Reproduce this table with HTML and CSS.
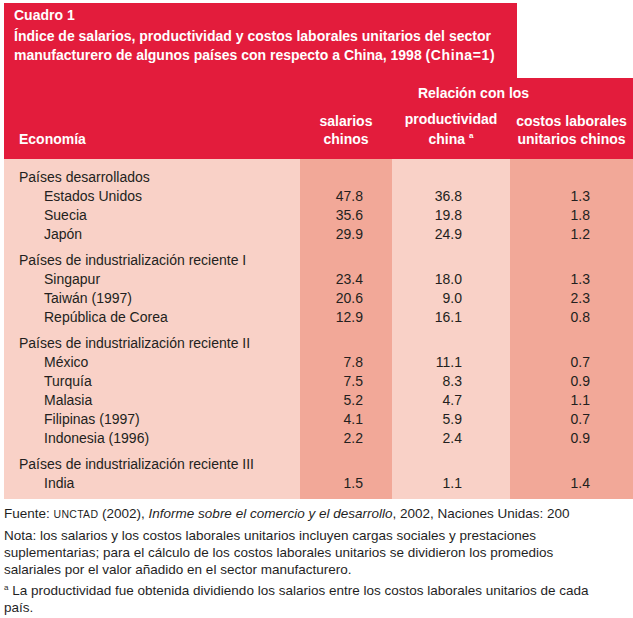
FILE: index.html
```html
<!DOCTYPE html>
<html lang="es">
<head>
<meta charset="utf-8">
<title>Cuadro 1</title>
<link rel="stylesheet" href="styles.css">
</head>
<body>
<div class="caption">
  <div class="caption-label">Cuadro 1</div>
  <div class="caption-title">Índice de salarios, productividad y costos laborales unitarios del sector<br>manufacturero de algunos países con respecto a China, 1998 <span class="paren">(China=1)</span></div>
</div>
<table class="data">
  <colgroup>
    <col class="c-eco">
    <col class="c-sal">
    <col class="c-pro">
    <col class="c-cos">
  </colgroup>
  <thead>
    <tr class="h-top">
      <th class="h-eco" rowspan="2">Economía</th>
      <th class="h-rel" colspan="3">Relación con los</th>
    </tr>
    <tr class="h-cols">
      <th class="h-col">salarios<br>chinos</th>
      <th class="h-col"><span class="h-first">productividad</span>china <sup class="sup">a</sup></th>
      <th class="h-col">costos laborales<br>unitarios chinos</th>
    </tr>
  </thead>
  <tbody>
    <tr class="grp first"><td class="name">Países desarrollados</td><td class="v1"></td><td class="v2"></td><td class="v3"></td></tr>
    <tr><td class="name item">Estados Unidos</td><td class="v1">47.8</td><td class="v2">36.8</td><td class="v3">1.3</td></tr>
    <tr><td class="name item">Suecia</td><td class="v1">35.6</td><td class="v2">19.8</td><td class="v3">1.8</td></tr>
    <tr><td class="name item">Japón</td><td class="v1">29.9</td><td class="v2">24.9</td><td class="v3">1.2</td></tr>

    <tr class="grp"><td class="name">Países de industrialización reciente I</td><td class="v1"></td><td class="v2"></td><td class="v3"></td></tr>
    <tr><td class="name item">Singapur</td><td class="v1">23.4</td><td class="v2">18.0</td><td class="v3">1.3</td></tr>
    <tr><td class="name item">Taiwán (1997)</td><td class="v1">20.6</td><td class="v2">9.0</td><td class="v3">2.3</td></tr>
    <tr><td class="name item">República de Corea</td><td class="v1">12.9</td><td class="v2">16.1</td><td class="v3">0.8</td></tr>

    <tr class="grp"><td class="name">Países de industrialización reciente II</td><td class="v1"></td><td class="v2"></td><td class="v3"></td></tr>
    <tr><td class="name item">México</td><td class="v1">7.8</td><td class="v2">11.1</td><td class="v3">0.7</td></tr>
    <tr><td class="name item">Turquía</td><td class="v1">7.5</td><td class="v2">8.3</td><td class="v3">0.9</td></tr>
    <tr><td class="name item">Malasia</td><td class="v1">5.2</td><td class="v2">4.7</td><td class="v3">1.1</td></tr>
    <tr><td class="name item">Filipinas (1997)</td><td class="v1">4.1</td><td class="v2">5.9</td><td class="v3">0.7</td></tr>
    <tr><td class="name item">Indonesia (1996)</td><td class="v1">2.2</td><td class="v2">2.4</td><td class="v3">0.9</td></tr>

    <tr class="grp"><td class="name">Países de industrialización reciente III</td><td class="v1"></td><td class="v2"></td><td class="v3"></td></tr>
    <tr class="last"><td class="name item">India</td><td class="v1">1.5</td><td class="v2">1.1</td><td class="v3">1.4</td></tr>
  </tbody>
</table>
<div class="notes">
  <p class="note source">Fuente: <span class="sc">UNCTAD</span> (2002), <em>Informe sobre el comercio y el desarrollo</em>, 2002, Naciones Unidas: 200</p>
  <p class="note">Nota: los salarios y los costos laborales unitarios incluyen cargas sociales y prestaciones<br>suplementarias; para el cálculo de los costos laborales unitarios se dividieron los promedios<br>salariales por el valor añadido en el sector manufacturero.</p>
  <p class="note"><sup class="fsup">a</sup> La productividad fue obtenida dividiendo los salarios entre los costos laborales unitarios de cada<br>país.</p>
</div>
</body>
</html>
```
FILE: styles.css
```css
html, body {
  margin: 0;
  padding: 0;
  background: #ffffff;
}

body {
  padding: 3px 0 0 4px;
  font-family: "Liberation Sans", Arial, Helvetica, sans-serif;
  color: #231f20;
  overflow: hidden;
}

.caption {
  box-sizing: border-box;
  width: 513px;
  height: 75px;
  background: #e31c3c;
  color: #ffffff;
  padding: 3px 4px 0 10px;
  font-size: 14px;
  font-weight: bold;
  line-height: 19px;
}

.caption-label {
  margin-bottom: 1px;
}

.caption-title {
  padding-top: 1px;
}

.paren {
  letter-spacing: 0.6px;
}

.data {
  width: 629px;
  border-collapse: collapse;
  border-spacing: 0;
  table-layout: fixed;
  font-size: 14px;
}

.c-eco { width: 296px; }
.c-sal { width: 92px; }
.c-pro { width: 118px; }
.c-cos { width: 123px; }

.data thead th {
  background: #e31c3c;
  color: #ffffff;
  font-weight: bold;
  font-size: 14px;
  line-height: 18px;
  padding: 0;
}

.h-top { height: 24px; }
.h-rel {
  vertical-align: top;
  text-align: center;
  padding: 6px 0 0 14px !important;
}

.h-cols { height: 57px; }

.h-eco {
  text-align: left;
  vertical-align: bottom;
  padding: 0 0 11px 15px !important;
}

.h-col {
  text-align: center;
  vertical-align: bottom;
  padding: 0 0 11px 0 !important;
}

.h-first {
  display: block;
  margin-bottom: 2px;
}

.sup {
  font-size: 8px;
  line-height: 0;
  vertical-align: 6px;
}

.data tbody td {
  padding: 0;
  line-height: 19px;
  vertical-align: top;
}

.name {
  background: #f9d1c7;
  padding-left: 15px !important;
  white-space: nowrap;
}

.name.item {
  padding-left: 40px !important;
}

.v1, .v3 {
  background: #f2a898;
  text-align: right;
}

.v2 {
  background: #f9d1c7;
  text-align: right;
}

.v1 { padding-right: 29px !important; }
.v2 { padding-right: 48px !important; }
.v3 { padding-right: 43px !important; }

.grp td { padding-top: 7px !important; }
.grp.first td { padding-top: 9px !important; }
.last td { padding-bottom: 6px !important; }

.notes {
  padding-top: 6px;
  color: #1f1f1f;
}

.note {
  margin: 0 0 4px 0;
  font-size: 13.5px;
  line-height: 17px;
  white-space: nowrap;
}

.sc {
  font-size: 10.5px;
  letter-spacing: 0.3px;
}

.fsup {
  font-size: 8px;
  line-height: 0;
  vertical-align: 5px;
}
```
